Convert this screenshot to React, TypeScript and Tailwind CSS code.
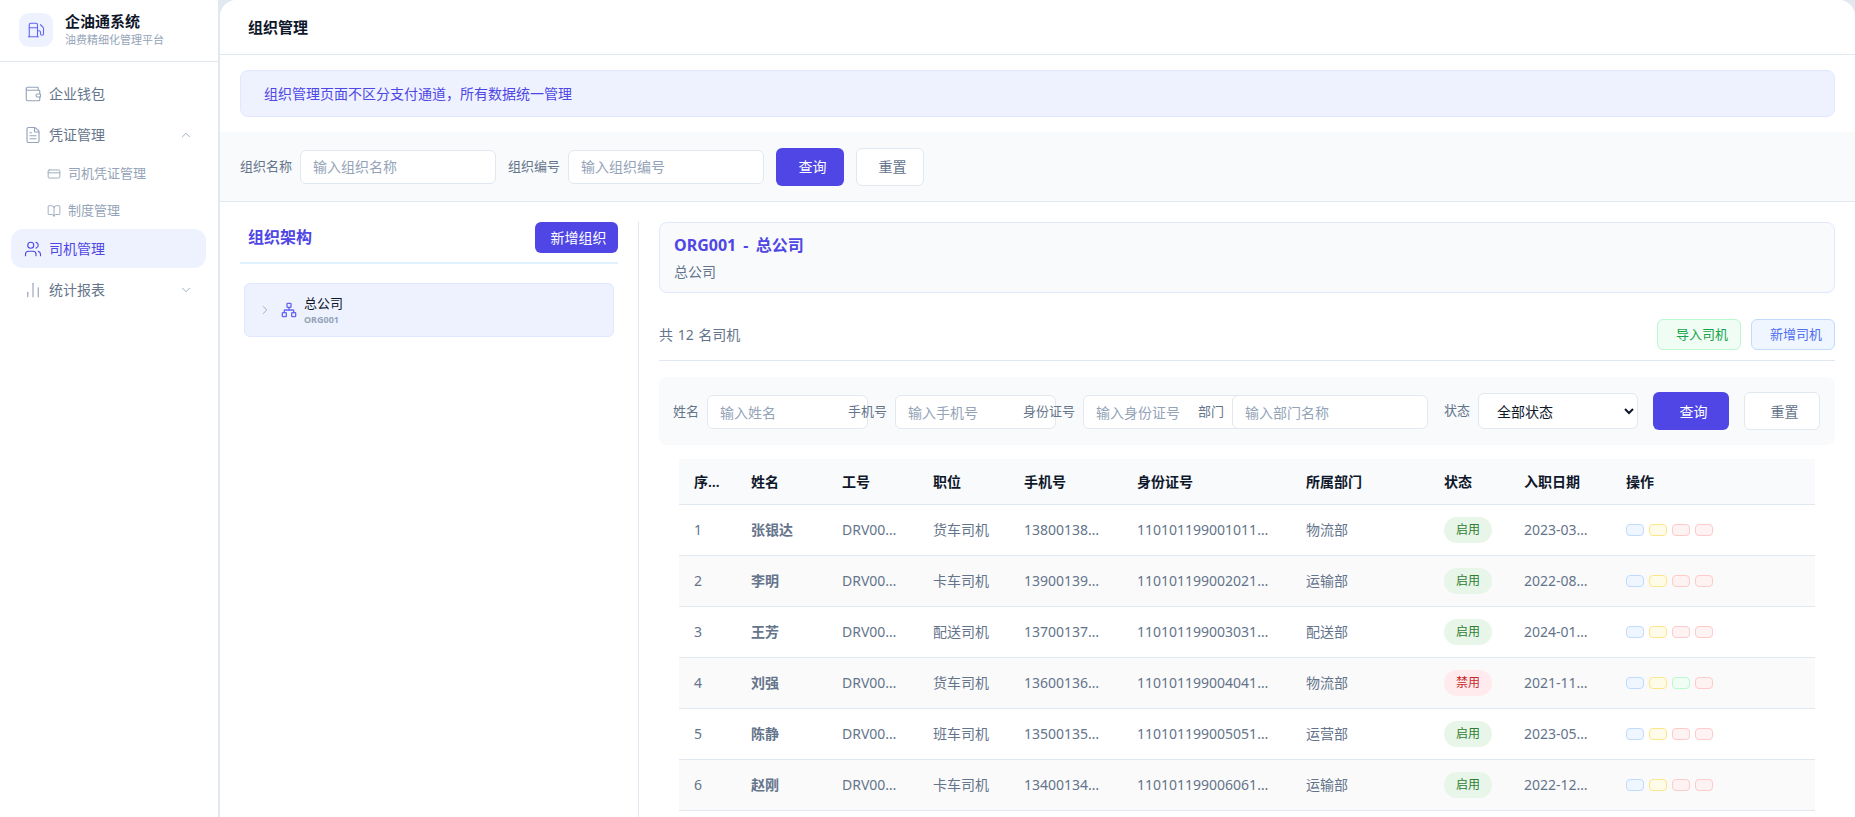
import {
  BookOpen,
  ChartNoAxesColumn,
  ChevronDown,
  ChevronRight,
  ChevronUp,
  CreditCard,
  FileText,
  Fuel,
  Network,
  Users,
  Wallet,
} from "lucide-react";

const drivers = [
  { id: 1, name: "张银达", no: "DRV00001", job: "货车司机", phone: "13800138000", card: "110101199001011234", dept: "物流部", on: true, date: "2023-03-15" },
  { id: 2, name: "李明", no: "DRV00002", job: "卡车司机", phone: "13900139000", card: "110101199002021234", dept: "运输部", on: true, date: "2022-08-20" },
  { id: 3, name: "王芳", no: "DRV00003", job: "配送司机", phone: "13700137000", card: "110101199003031234", dept: "配送部", on: true, date: "2024-01-10" },
  { id: 4, name: "刘强", no: "DRV00004", job: "货车司机", phone: "13600136000", card: "110101199004041234", dept: "物流部", on: false, date: "2021-11-05" },
  { id: 5, name: "陈静", no: "DRV00005", job: "班车司机", phone: "13500135000", card: "110101199005051234", dept: "运营部", on: true, date: "2023-05-18" },
  { id: 6, name: "赵刚", no: "DRV00006", job: "卡车司机", phone: "13400134000", card: "110101199006061234", dept: "运输部", on: true, date: "2022-12-01" },
];

const columns = [
  { label: "序号", w: "w-[57px]" },
  { label: "姓名", w: "w-[91px]" },
  { label: "工号", w: "w-[91px]" },
  { label: "职位", w: "w-[91px]" },
  { label: "手机号", w: "w-[113px]" },
  { label: "身份证号", w: "w-[169px]" },
  { label: "所属部门", w: "w-[138px]" },
  { label: "状态", w: "w-[80px]" },
  { label: "入职日期", w: "w-[102px]" },
  { label: "操作", w: "w-[204px]" },
];

function Sidebar() {
  return (
    <aside className="flex w-[218px] shrink-0 flex-col bg-white">
      <div className="flex h-[62px] items-center gap-3 border-b border-[#e2e8f0] pb-[2px] pl-[19px]">
        <div className="flex h-[34px] w-[34px] items-center justify-center rounded-[10px] bg-[#eef2ff]">
          <Fuel size={18} strokeWidth={1.5} className="text-[#6366f1]" />
        </div>
        <div>
          <div className="text-[15px] leading-[18px] font-semibold text-[#0f172a]">企油通系统</div>
          <div className="mt-[2px] text-[11px] leading-[15px] text-[#94a3b8]">油费精细化管理平台</div>
        </div>
      </div>
      <nav className="flex w-[206px] flex-col pt-[12px] pl-[11px] text-[14px] text-[#64748b]">
        <div className="flex h-[39px] items-center gap-[7px] rounded-xl pl-[13px]">
          <Wallet size={18} strokeWidth={1.5} className="text-[#94a3b8]" />
          企业钱包
        </div>
        <div className="mt-[2px] flex h-[39px] items-center gap-[7px] rounded-xl pr-[13px] pl-[13px]">
          <FileText size={18} strokeWidth={1.5} className="text-[#94a3b8]" />
          <span className="flex-1">凭证管理</span>
          <ChevronUp size={14} strokeWidth={1.5} className="text-[#94a3b8]" />
        </div>
        <div className="mt-[1px] flex h-[37px] items-center gap-[7px] pl-[36px] text-[13px] text-[#94a3b8]">
          <CreditCard size={14} strokeWidth={1.5} />
          司机凭证管理
        </div>
        <div className="flex h-[37px] items-center gap-[7px] pl-[36px] text-[13px] text-[#94a3b8]">
          <BookOpen size={14} strokeWidth={1.5} />
          制度管理
        </div>
        <div className="flex h-[39px] items-center gap-[7px] rounded-xl bg-[#eef2ff] pl-[13px] text-[#4f46e5]">
          <Users size={18} strokeWidth={1.5} />
          司机管理
        </div>
        <div className="mt-[2px] flex h-[39px] items-center gap-[7px] rounded-xl pr-[13px] pl-[13px]">
          <ChartNoAxesColumn size={18} strokeWidth={1.5} className="text-[#94a3b8]" />
          <span className="flex-1">统计报表</span>
          <ChevronDown size={14} strokeWidth={1.5} className="text-[#94a3b8]" />
        </div>
      </nav>
    </aside>
  );
}

function Field({ label, placeholder, w, inputW }: { label: string; placeholder: string; w: string; inputW: string }) {
  return (
    <div className={`flex shrink-0 items-center gap-2 ${w}`}>
      <span className="shrink-0 text-[13px] text-[#64748b]">{label}</span>
      <input
        placeholder={placeholder}
        className={`h-[34px] shrink-0 rounded-md border border-[#e2e8f0] bg-white px-3 text-[14px] placeholder:text-[#94a3b8] ${inputW}`}
      />
    </div>
  );
}

function ActionDots({ third }: { third: boolean }) {
  return (
    <div className="flex gap-[5px]">
      <span className="h-[12px] w-[18px] rounded-[4px] border border-[#bfdbfe] bg-[#eff6ff]" />
      <span className="h-[12px] w-[18px] rounded-[4px] border border-[#fde68a] bg-[#fefce8]" />
      {third ? (
        <span className="h-[12px] w-[18px] rounded-[4px] border border-[#fecaca] bg-[#fef2f2]" />
      ) : (
        <span className="h-[12px] w-[18px] rounded-[4px] border border-[#bbf7d0] bg-[#f0fdf4]" />
      )}
      <span className="h-[12px] w-[18px] rounded-[4px] border border-[#fecaca] bg-[#fef2f2]" />
    </div>
  );
}

function DriverTable() {
  return (
    <div className="mt-[14px] pl-[20px]">
      <table className="w-[1136px] table-fixed border-collapse text-left text-[14px]">
        <thead>
          <tr className="h-[45px] border-b border-[#e2e8f0] bg-[#f8fafc] text-[#0f172a]">
            {columns.map((c) => (
              <th key={c.label} className={`truncate px-[15px] font-semibold ${c.w}`}>
                {c.label}
              </th>
            ))}
          </tr>
        </thead>
        <tbody className="text-[#64748b]">
          {drivers.map((d) => (
            <tr key={d.id} className="h-[51px] border-b border-[#e2e8f0] even:bg-[#fafafa]">
              <td className="truncate px-[15px]">{d.id}</td>
              <td className="truncate px-[15px] font-semibold">{d.name}</td>
              <td className="truncate px-[15px]">{d.no}</td>
              <td className="truncate px-[15px]">{d.job}</td>
              <td className="truncate px-[15px]">{d.phone}</td>
              <td className="truncate px-[15px]">{d.card}</td>
              <td className="truncate px-[15px]">{d.dept}</td>
              <td className="px-[15px]">
                {d.on ? (
                  <span className="inline-block h-[26px] w-[48px] rounded-full bg-[#e8f5e9] text-center text-[12px] leading-[26px] text-[#2e7d32]">启用</span>
                ) : (
                  <span className="inline-block h-[26px] w-[48px] rounded-full bg-[#ffebee] text-center text-[12px] leading-[26px] text-[#c62828]">禁用</span>
                )}
              </td>
              <td className="truncate pr-[21px] pl-[15px]">{d.date}</td>
              <td className="px-[15px]">
                <ActionDots third={d.on} />
              </td>
            </tr>
          ))}
        </tbody>
      </table>
    </div>
  );
}

export default function App() {
  return (
    <div className="flex h-screen overflow-hidden bg-[#e2e8f0] [font-family:'Noto_Sans','Noto_Sans_CJK_SC',sans-serif]">
      <Sidebar />
      <main className="ml-[2px] flex min-w-0 flex-1 flex-col overflow-hidden rounded-t-2xl bg-white">
        <header className="flex h-[55px] shrink-0 items-center border-b border-[#e2e8f0] pl-[28px] text-[15px] font-semibold text-[#0f172a]">
          组织管理
        </header>

        <div className="mx-5 mt-[15px] flex h-[47px] shrink-0 items-center rounded-lg border border-[#e0e7ff] bg-[#eef2ff] pl-[23px] text-[14px] text-[#4f46e5]">
          组织管理页面不区分支付通道，所有数据统一管理
        </div>

        <div className="mt-[15px] flex h-[70px] shrink-0 items-center border-b border-[#e2e8f0] bg-[#f8fafc] px-5">
          <Field label="组织名称" placeholder="输入组织名称" w="mr-3" inputW="w-[196px]" />
          <Field label="组织编号" placeholder="输入组织编号" w="mr-3" inputW="w-[196px]" />
          <button className="h-[38px] w-[68px] rounded-md bg-[#4f46e5] pl-[5px] text-[14px] text-white">查询</button>
          <button className="ml-3 h-[38px] w-[68px] rounded-md border border-[#e2e8f0] bg-white pl-[5px] text-[14px] text-[#64748b]">重置</button>
        </div>

        <div className="mt-5 flex min-h-0 flex-1 px-5">
          <section className="w-[399px] shrink-0 border-r border-[#e2e8f0] pr-5">
            <div className="flex h-[42px] items-start justify-between border-b-2 border-[#e0f2fe]">
              <h2 className="pt-[3px] pl-2 text-[16px] font-semibold text-[#4f46e5]">组织架构</h2>
              <button className="h-[31px] w-[83px] rounded-md bg-[#4f46e5] pl-[4px] text-[14px] text-white">新增组织</button>
            </div>
            <div className="mt-[19px] mr-[4px] ml-[4px] flex h-[54px] items-center rounded-md border border-[#e0e7ff] bg-[#eef2ff] pl-[13px]">
              <ChevronRight size={14} strokeWidth={1.5} className="text-[#94a3b8]" />
              <Network size={16} strokeWidth={2} className="ml-[9px] text-[#6366f1]" />
              <div className="ml-[7px]">
                <div className="text-[13px] leading-[18px] text-[#0f172a]">总公司</div>
                <div className="text-[9px] leading-[15px] font-bold text-[#94a3b8]">ORG001</div>
              </div>
            </div>
          </section>

          <section className="min-w-0 flex-1 pl-5">
            <div className="flex h-[71px] flex-col justify-center rounded-lg border border-[#e0e7ff] bg-[#f8fafc] pl-[14px]">
              <div className="text-[16px] leading-[22px] font-bold [word-spacing:3px] text-[#4f46e5]">ORG001 - 总公司</div>
              <div className="mt-[6px] text-[14px] leading-[20px] text-[#64748b]">总公司</div>
            </div>

            <div className="mt-[26px] flex h-[42px] items-start justify-between border-b border-[#e2e8f0]">
              <span className="pt-[5px] text-[14px] [word-spacing:1px] text-[#64748b]">共 12 名司机</span>
              <div className="flex gap-[10px]">
                <button className="h-[31px] w-[84px] rounded-md border border-[#bbf7d0] bg-[#f0fdf4] pl-[6px] text-[13px] text-[#16a34a]">导入司机</button>
                <button className="h-[31px] w-[84px] rounded-md border border-[#bfdbfe] bg-[#eff6ff] pl-[6px] text-[13px] text-[#4f6ef0]">新增司机</button>
              </div>
            </div>

            <div className="mt-[16px] flex h-[68px] items-center rounded-lg bg-[#f8fafc] pl-[14px]">
              <Field label="姓名" placeholder="输入姓名" w="mr-3 w-[163px] pt-[2px]" inputW="w-[161px]" />
              <Field label="手机号" placeholder="输入手机号" w="mr-3 w-[163px] pt-[2px]" inputW="w-[161px]" />
              <Field label="身份证号" placeholder="输入身份证号" w="mr-3 w-[163px] pt-[2px]" inputW="w-[161px]" />
              <Field label="部门" placeholder="输入部门名称" w="mr-3 w-[234px] pt-[2px]" inputW="w-[196px]" />
              <span className="mr-2 text-[13px] text-[#64748b]">状态</span>
              <select className="h-[36px] w-[160px] rounded-md border border-[#e2e8f0] bg-white pl-[14px] text-[14px] text-[#0f172a]">
                <option>全部状态</option>
              </select>
              <button className="ml-[15px] h-[38px] w-[76px] rounded-md bg-[#4f46e5] pl-[5px] text-[14px] text-white">查询</button>
              <button className="ml-[15px] h-[38px] w-[76px] rounded-md border border-[#e2e8f0] bg-white pl-[5px] text-[14px] text-[#64748b]">重置</button>
            </div>

            <DriverTable />
          </section>
        </div>
      </main>
    </div>
  );
}
